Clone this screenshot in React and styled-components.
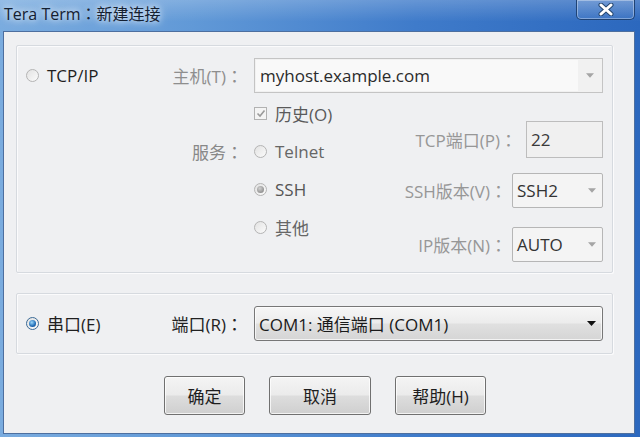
import styled, { createGlobalStyle } from 'styled-components'

const GlobalStyle = createGlobalStyle`
  html, body {
    margin: 0;
    padding: 0;
    overflow: hidden;
  }
  body {
    font-family: "Open Sans", "Noto Sans CJK SC", sans-serif;
    font-size: 17px;
  }
`;

const Window = styled.div`
  width: 640px;
  height: 437px;
  display: flex;
  flex-direction: column;
  background: linear-gradient(90deg, #7aacdf 0%, #6199d7 30%, #3f7bca 65%, #2c68be 100%);
`;

const TitleBar = styled.div`
  height: 31px;
  flex-shrink: 0;
  display: flex;
  align-items: flex-start;
  background: linear-gradient(180deg, rgba(255,255,255,0.2), rgba(255,255,255,0) 70%);
`;

const Title = styled.div`
  padding-left: 4px;
  line-height: 27px;
  font-size: 16px;
  color: #142031;
  text-shadow: 0 0 6px rgba(255,255,255,0.95), 0 0 12px rgba(255,255,255,0.7);
`;

// full-width colon, centred in its box as in the original dialog font
const Colon = styled.span`
  font-family: "Noto Sans CJK TC", "Noto Sans CJK SC", sans-serif;
`;

const CloseButton = styled.div`
  margin-left: auto;
  margin-right: 5px;
  width: 59px;
  height: 20px;
  box-sizing: border-box;
  border: 1px solid #1f4375;
  border-top: none;
  border-radius: 0 0 5px 5px;
  box-shadow: inset 0 0 0 1px rgba(255,255,255,0.35);
  background: linear-gradient(180deg, rgba(255,255,255,0.15), rgba(255,255,255,0.04));
  display: flex;
  align-items: center;
  justify-content: center;
`;

const Client = styled.div`
  flex: 1;
  margin: 0 5px 3px 3px;
  border: 1px solid #4d6f9f;
  background: #eff0f2;
  padding: 13px 21px 0 12px;
  display: flex;
  flex-direction: column;
`;

const GroupBox = styled.div`
  border: 1px solid #d6dadf;
  border-radius: 2px;
  box-shadow: inset 1px 1px 0 #fbfbfc, 1px 1px 0 #fbfbfc;
  padding: 12px 9px ${p => p.$bottom}px 9px;
  display: flex;
  flex-direction: column;
  & + & {
    margin-top: 20px;
  }
`;

const Row = styled.div`
  display: flex;
  align-items: center;
  height: 35px;
`;

const LeadCell = styled.div`
  width: 217px;
  flex-shrink: 0;
  display: flex;
  align-items: center;
  justify-content: space-between;
  white-space: nowrap;
`;

const Choice = styled.label`
  display: flex;
  align-items: center;
  gap: 8px;
  color: ${p => p.$color || '#1f1f1f'};
  white-space: nowrap;
`;

const FieldLabel = styled.span`
  color: ${p => (p.$dim ? '#8e8e8e' : '#222')};
  white-space: nowrap;
`;

const Radio = styled.span`
  width: 13px;
  height: 13px;
  box-sizing: border-box;
  border-radius: 50%;
  border: 1px solid ${p => (p.$disabled ? '#b4b4b4' : '#3b6a96')};
  background: linear-gradient(135deg, #e2e2e2, #fbfbfb);
  display: flex;
  align-items: center;
  justify-content: center;
  flex-shrink: 0;
  &::after {
    content: '';
    display: ${p => (p.$checked ? 'block' : 'none')};
    width: 7px;
    height: 7px;
    border-radius: 50%;
    background: ${p =>
      p.$disabled
        ? 'radial-gradient(circle at 40% 35%, #d0d0d0, #8f8f8f 75%)'
        : 'radial-gradient(circle at 40% 35%, #9ad6fa, #1f6cb6 60%, #0e3c74)'};
  }
`;

const Check = styled.span`
  width: 13px;
  height: 13px;
  box-sizing: border-box;
  border: 1px solid #b2b2b2;
  background: #f4f4f4;
  display: flex;
  align-items: center;
  justify-content: center;
`;

const HostCombo = styled.div`
  flex: 1;
  margin-left: 11px;
  height: 35px;
  box-sizing: border-box;
  border: 1px solid #c4c4c4;
  background: #f1f1f1;
  display: flex;
`;

const HostField = styled.div`
  flex: 1;
  margin: 1px 0 1px 1px;
  background: #f9f9f9;
  padding-left: 4px;
  display: flex;
  align-items: center;
  color: #2b2b2b;
`;

const CaretBox = styled.div`
  width: 24px;
  display: flex;
  align-items: center;
  justify-content: center;
`;

const Lower = styled.div`
  display: flex;
`;

const ServiceGrid = styled.div`
  display: grid;
  grid-template-columns: 217px auto;
  column-gap: 11px;
  grid-auto-rows: 38px;
  align-items: center;
  margin-top: 1px;
  align-self: flex-start;
`;

const ServiceLabel = styled.span`
  text-align: right;
  color: #888;
`;

const Settings = styled.div`
  margin-left: auto;
  padding-top: 28px;
  display: flex;
  flex-direction: column;
  align-items: flex-end;
`;

const SettingRow = styled.div`
  display: flex;
  align-items: center;
  gap: ${p => p.$gap}px;
  margin-top: ${p => p.$top || 0}px;
  color: #979797;
  white-space: nowrap;
`;

const PortInput = styled.div`
  width: 77px;
  height: 37px;
  box-sizing: border-box;
  border: 1px solid #bdbdbd;
  background: #f0f0f0;
  padding-left: 4px;
  display: flex;
  align-items: center;
  color: #3a3a3a;
`;

const SmallCombo = styled.div`
  width: 91px;
  height: 35px;
  box-sizing: border-box;
  border: 1px solid #b6b6b6;
  border-radius: 2px;
  background: #f4f4f4;
  padding: 0 6px 0 4px;
  display: flex;
  align-items: center;
  justify-content: space-between;
  color: #333;
`;

const PortCombo = styled.div`
  flex: 1;
  margin-left: 11px;
  height: 35px;
  box-sizing: border-box;
  border: 1px solid #777;
  border-radius: 3px;
  background: linear-gradient(180deg, #f6f6f6 0%, #ececec 48%, #e0e0e0 52%, #d5d5d5 100%);
  box-shadow: inset 0 0 0 1px rgba(255,255,255,0.7);
  padding: 0 6px 0 4px;
  display: flex;
  align-items: center;
  justify-content: space-between;
  color: #1a1a1a;
`;

const ButtonRow = styled.div`
  display: flex;
  gap: 24px;
  margin-top: 22px;
  padding-left: 148px;
`;

const Button = styled.button`
  width: ${p => p.$w}px;
  height: 39px;
  box-sizing: border-box;
  border: 1px solid #707070;
  border-radius: 3px;
  background: linear-gradient(180deg, #f4f4f4 0%, #ebebeb 48%, #dddddd 52%, #cfcfcf 100%);
  box-shadow: inset 0 0 0 1px rgba(255,255,255,0.75);
  font-family: inherit;
  font-size: 17px;
  color: #1e1e1e;
  padding: 0;
`;

function Caret({ color, w = 9 }) {
  return (
    <svg width={w} height="5" viewBox="0 0 9 5">
      <path d="M0 0 H9 L4.5 5 Z" fill={color} />
    </svg>
  );
}

function CloseGlyph() {
  return (
    <svg width="16" height="13" viewBox="0 0 16 13">
      <path d="M3 2 L13 11 M13 2 L3 11" stroke="#24466f" strokeWidth="5" strokeLinecap="round" />
      <path d="M3 2 L13 11 M13 2 L3 11" stroke="#ffffff" strokeWidth="3" strokeLinecap="round" />
    </svg>
  );
}

function CheckMark() {
  return (
    <svg width="10" height="9" viewBox="0 0 10 9">
      <path d="M1.5 4.5 L4 7 L8.5 1.5" stroke="#9a9a9a" strokeWidth="1.6" fill="none" />
    </svg>
  );
}

export default function App() {
  return (
    <>
      <GlobalStyle />
      <Window>
        <TitleBar>
          <Title>Tera Term<Colon>：</Colon>新建连接</Title>
          <CloseButton>
            <CloseGlyph />
          </CloseButton>
        </TitleBar>
        <Client>
          <GroupBox $bottom={10}>
            <Row>
              <LeadCell>
                <Choice>
                  <Radio $disabled />
                  TCP/IP
                </Choice>
                <FieldLabel $dim>主机(T)<Colon>：</Colon></FieldLabel>
              </LeadCell>
              <HostCombo>
                <HostField>myhost.example.com</HostField>
                <CaretBox>
                  <Caret color="#a5a5a5" w={8} />
                </CaretBox>
              </HostCombo>
            </Row>
            <Lower>
              <ServiceGrid>
                <span />
                <Choice $color="#5a5a5a">
                  <Check>
                    <CheckMark />
                  </Check>
                  历史(O)
                </Choice>
                <ServiceLabel>服务<Colon>：</Colon></ServiceLabel>
                <Choice $color="#666">
                  <Radio $disabled />
                  Telnet
                </Choice>
                <span />
                <Choice $color="#555">
                  <Radio $disabled $checked />
                  SSH
                </Choice>
                <span />
                <Choice $color="#666">
                  <Radio $disabled />
                  其他
                </Choice>
              </ServiceGrid>
              <Settings>
                <SettingRow $gap={9}>
                  <span>TCP端口(P)<Colon>：</Colon></span>
                  <PortInput>22</PortInput>
                </SettingRow>
                <SettingRow $gap={5} $top={15}>
                  <span>SSH版本(V)<Colon>：</Colon></span>
                  <SmallCombo>
                    SSH2
                    <Caret color="#a5a5a5" w={8} />
                  </SmallCombo>
                </SettingRow>
                <SettingRow $gap={5} $top={19}>
                  <span>IP版本(N)<Colon>：</Colon></span>
                  <SmallCombo>
                    AUTO
                    <Caret color="#a5a5a5" w={8} />
                  </SmallCombo>
                </SettingRow>
              </Settings>
            </Lower>
          </GroupBox>
          <GroupBox $bottom={12}>
            <Row>
              <LeadCell>
                <Choice>
                  <Radio $checked />
                  串口(E)
                </Choice>
                <FieldLabel>端口(R)<Colon>：</Colon></FieldLabel>
              </LeadCell>
              <PortCombo>
                COM1: 通信端口 (COM1)
                <Caret color="#111" w={9} />
              </PortCombo>
            </Row>
          </GroupBox>
          <ButtonRow>
            <Button $w={81}>确定</Button>
            <Button $w={102}>取消</Button>
            <Button $w={91}>帮助(H)</Button>
          </ButtonRow>
        </Client>
      </Window>
    </>
  );
}
